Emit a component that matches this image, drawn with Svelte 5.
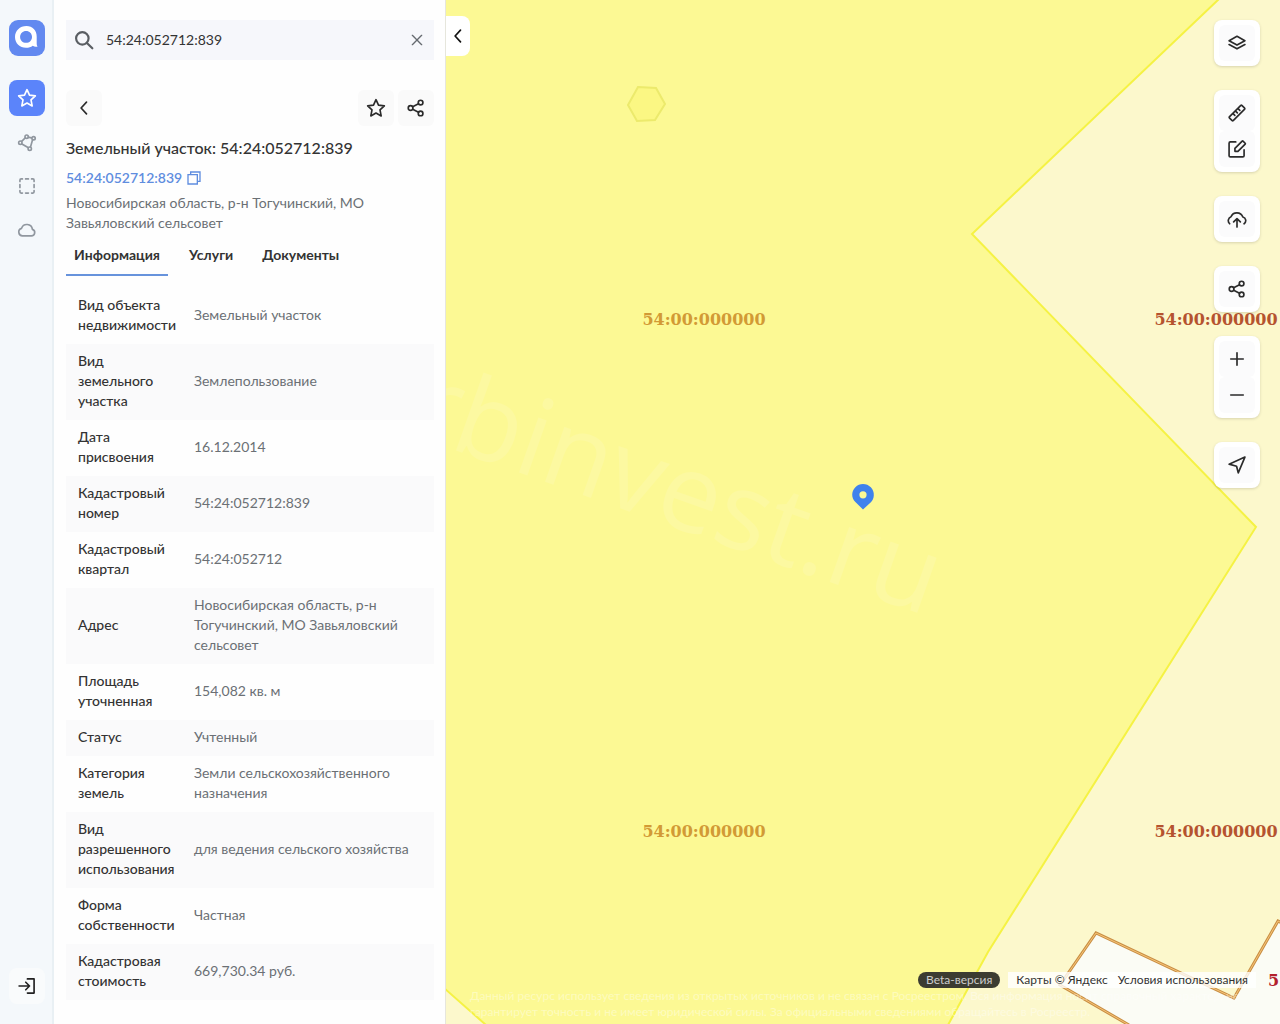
<script lang="ts">
	const cadNumber = '54:24:052712:839';

	let query = $state(cadNumber);
	let activeTab = $state('Информация');

	const tabs = ['Информация', 'Услуги', 'Документы'];

	const rows = [
		{ label: 'Вид объекта недвижимости', value: 'Земельный участок' },
		{ label: 'Вид земельного участка', value: 'Землепользование' },
		{ label: 'Дата присвоения', value: '16.12.2014' },
		{ label: 'Кадастровый номер', value: cadNumber },
		{ label: 'Кадастровый квартал', value: '54:24:052712' },
		{ label: 'Адрес', value: 'Новосибирская область, р-н Тогучинский, МО Завьяловский сельсовет' },
		{ label: 'Площадь уточненная', value: '154,082 кв. м' },
		{ label: 'Статус', value: 'Учтенный' },
		{ label: 'Категория земель', value: 'Земли сельскохозяйственного назначения' },
		{ label: 'Вид разрешенного использования', value: 'для ведения сельского хозяйства' },
		{ label: 'Форма собственности', value: 'Частная' },
		{ label: 'Кадастровая стоимость', value: '669,730.34 руб.' }
	];

	// Map controls, grouped the way they share a card
	const controls = [
		[{ icon: 'layers', label: 'Слои' }],
		[
			{ icon: 'ruler', label: 'Линейка' },
			{ icon: 'edit', label: 'Рисование' }
		],
		[{ icon: 'upload', label: 'Загрузить' }],
		[{ icon: 'share', label: 'Поделиться' }],
		[
			{ icon: 'plus', label: 'Приблизить' },
			{ icon: 'minus', label: 'Отдалить' }
		],
		[{ icon: 'locate', label: 'Моё местоположение' }]
	];

	const quarterLabels = [
		{ x: 258, y: 325, inner: true },
		{ x: 770, y: 325, inner: false },
		{ x: 258, y: 837, inner: true },
		{ x: 770, y: 837, inner: false }
	];
</script>

{#snippet icon(name: string)}
	<svg class="icon" viewBox="0 0 24 24" aria-hidden="true">
		{#if name === 'star'}
			<path d="M12 2l3 6.600 7 .8-5.200 4.900 1.400 7.200L12 18l-6.200 3.500 1.400-7.200L2 9.400l7-.8z" />
		{:else if name === 'polygon'}
			<path d="M5.600 11.300l4.300-4.200M13.400 6.100l3.900.9M5.900 14.300l7.300 4.400M18.600 9.700l-2.400 8.200" />
			<circle cx="4" cy="12.800" r="2" />
			<circle cx="11.600" cy="5.600" r="2" />
			<circle cx="19.900" cy="7.500" r="2" />
			<circle cx="15.300" cy="20" r="2" />
		{:else if name === 'area'}
			<path d="M3.500 6.500V5A1.500 1.500 0 0 1 5 3.500h1.500M10.300 3.500h3.400M17.500 3.500H19A1.500 1.500 0 0 1 20.500 5v1.500M20.500 10.300v3.400M20.500 17.500V19a1.500 1.500 0 0 1-1.500 1.500h-1.500M13.700 20.500h-3.400M6.500 20.500H5A1.500 1.500 0 0 1 3.500 19v-1.500M3.500 13.700v-3.400" />
		{:else if name === 'cloud'}
			<path d="M7.200 19h10a4 4 0 0 0 1.300-7.800 6.700 6.700 0 0 0-13-1.200A4.600 4.600 0 0 0 7.200 19z" />
		{:else if name === 'login'}
			<path d="M12.500 3.500h8v17h-8M2.500 12h12.500M10.500 7.500L15 12l-4.500 4.500" />
		{:else if name === 'back'}
			<path d="M15 5L8.500 12l6.500 7" />
		{:else if name === 'share'}
			<circle cx="5.500" cy="12" r="2.800" />
			<circle cx="17.500" cy="5.500" r="2.800" />
			<circle cx="17.500" cy="18.500" r="2.800" />
			<path d="M8 10.600l7-3.700M8 13.400l7 3.700" />
		{:else if name === 'search'}
			<circle cx="10" cy="10" r="7.500" />
			<path d="M15.500 15.500l6.500 6.500" />
		{:else if name === 'close'}
			<path d="M5 5l14 14M19 5L5 19" />
		{:else if name === 'copy'}
			<path d="M3 7h14v14H3zM7 7V3h14v14h-4" />
		{:else if name === 'layers'}
			<path d="M12 4l9.500 5.200L12 14.500 2.500 9.200zM2.500 13.800L12 19l9.500-5.200" />
		{:else if name === 'ruler'}
			<path d="M2.800 16.600L16.600 2.800q.6-.5 1.200 0l3.400 3.400q.5.6 0 1.200L7.400 21.200q-.6.500-1.200 0l-3.400-3.400q-.5-.6 0-1.200zM7 12.400l2.400 2.400M10 9.400l2.400 2.400M13 6.400l2.400 2.400" />
		{:else if name === 'edit'}
			<path d="M10.500 3.500H4A1.500 1.500 0 0 0 2.500 5v15A1.500 1.500 0 0 0 4 21.500h15a1.500 1.500 0 0 0 1.500-1.500v-7M9.500 14.800v-3.600l8.700-8.700q.5-.5 1 0l2.600 2.600q.5.500 0 1l-8.700 8.700z" />
		{:else if name === 'upload'}
			<path d="M3.200 17.700A5 5 0 0 1 4.800 9.300 7.600 7.600 0 0 1 19 9.600a4.500 4.500 0 0 1 1.500 8.100M12 21.500v-9.500M8 15.500l4-4 4 4" />
		{:else if name === 'plus'}
			<path d="M12 4.500v15M4.500 12h15" />
		{:else if name === 'minus'}
			<path d="M4.500 12h15" />
		{:else if name === 'locate'}
			<path d="M21.500 2.500L2.500 11l9 2.500 2 8z" />
		{/if}
	</svg>
{/snippet}

<div class="app">
	<nav class="sidebar">
		<a class="logo" href="/" aria-label="Главная">
			<svg viewBox="0 0 36 36" aria-hidden="true">
				<path d="M17.500 6C10.800 6 6 10.800 6 17.100s4.800 10.700 11 10.700c2.800 0 4.900-.8 6.700-2.100 1.600 1.100 3.200 1.200 4.900.8-.8-1.100-.9-2.200-.9-3.600V16.500C27.700 10.400 23.500 6 17.500 6zm-.4 4.900c3.400 0 5.900 2.600 5.900 6s-2.500 5.900-5.900 5.900-6-2.500-6-5.900 2.600-6 6-6z" />
			</svg>
		</a>
		<button class="nav-btn active" aria-label="Избранное">{@render icon('star')}</button>
		<button class="nav-btn" aria-label="Контуры">{@render icon('polygon')}</button>
		<button class="nav-btn" aria-label="Область">{@render icon('area')}</button>
		<button class="nav-btn" aria-label="Облако">{@render icon('cloud')}</button>
		<button class="nav-btn login" aria-label="Войти">{@render icon('login')}</button>
	</nav>

	<aside class="panel">
		<div class="search">
			{@render icon('search')}
			<input type="text" aria-label="Поиск" bind:value={query} />
			<button class="clear" aria-label="Очистить" onclick={() => (query = '')}>{@render icon('close')}</button>
		</div>

		<div class="toolbar">
			<button class="tool back" aria-label="Назад">{@render icon('back')}</button>
			<button class="tool" aria-label="В избранное">{@render icon('star')}</button>
			<button class="tool" aria-label="Поделиться">{@render icon('share')}</button>
		</div>

		<h1>Земельный участок: {cadNumber}</h1>
		<div class="number">
			<a href="#{cadNumber}">{cadNumber}</a>
			<button class="copy" aria-label="Скопировать">{@render icon('copy')}</button>
		</div>
		<p class="address">Новосибирская область, р-н Тогучинский, МО Завьяловский сельсовет</p>

		<div class="tabs" role="tablist">
			{#each tabs as tab}
				<button
					class="tab"
					class:selected={activeTab === tab}
					role="tab"
					aria-selected={activeTab === tab}
					onclick={() => (activeTab = tab)}>{tab}</button
				>
			{/each}
		</div>

		<table>
			<tbody>
				{#each rows as row}
					<tr>
						<th scope="row">{row.label}</th>
						<td>{row.value}</td>
					</tr>
				{/each}
			</tbody>
		</table>
	</aside>

	<main class="map">
		<svg class="canvas" viewBox="0 0 834 1024" preserveAspectRatio="xMinYMin slice" aria-hidden="true">
			<rect class="parcel" width="834" height="1024" />
			<path class="outside" d="M773 -1L526 234 810 527 542 952 502 1025H835V-1z" />
			<path class="outside" d="M-2 988L40 1025H-2z" />
			<path class="hexagon" d="M192 87l18 1 9 16-10 16-18 1-9-16z" />
			<path class="clear-land" d="M835 919L788 998 650 933 614 985 683 1025H835z" />
			<path class="road" d="M683 1025L614 985 650 933 788 998 832 921 836 923" />
			<path class="road-core" d="M683 1025L614 985 650 933 788 998 832 921 836 923" />
			<text class="watermark" x="480" y="616" transform="rotate(19.400 480 616)">urbinvest.ru</text>
			{#each quarterLabels as l}
				<text class="quarter" class:inner={l.inner} x={l.x} y={l.y} text-anchor="middle">54:00:000000</text>
			{/each}
			<text class="quarter red" x="822" y="986">5</text>
			<path class="pin" d="M417 484a10.800 10.800 0 0 0-10.800 10.800c0 3 1.200 5.200 3.200 7.300L417 509.500l7.600-6.900c2-2.100 3.200-4.300 3.200-7.300A10.800 10.800 0 0 0 417 484zm0 7.200a3.600 3.600 0 1 1 0 7.200 3.600 3.600 0 0 1 0-7.200z" />
		</svg>

		<button class="collapse" aria-label="Свернуть панель">{@render icon('back')}</button>

		<div class="controls">
			{#each controls as group}
				<div class="group">
					{#each group as c}
						<button class="control" aria-label={c.label}>{@render icon(c.icon)}</button>
					{/each}
				</div>
			{/each}
		</div>

		<footer>
			<div class="credits">
				<span class="beta">Beta-версия</span>
				<span class="copyright">
					<a href="#yandex">Карты © Яндекс</a>
					<a href="#terms">Условия использования</a>
				</span>
			</div>
			<p class="disclaimer">
				Данный ресурс использует сведения из открытых источников и не связан с Росреестром. Вся информация носит справочный характер, не
				гарантирует точность и не имеет юридической силы. За официальными сведениями обращайтесь в Росреестр.
			</p>
		</footer>
	</main>
</div>

<style>
	:global(body) {
		margin: 0;
		background: #fefefe;
		color: #333;
		font-family: Lato, 'Noto Sans', sans-serif;
		font-size: 14px;
		line-height: 20px;
	}

	.app {
		display: grid;
		grid-template-columns: 54px 392px 1fr;
		height: 100vh;
		overflow: hidden;
	}

	button {
		display: flex;
		align-items: center;
		justify-content: center;
		padding: 0;
		border: 0;
		background: none;
		color: inherit;
		font: inherit;
		cursor: pointer;
	}

	a {
		color: inherit;
		text-decoration: none;
	}

	.icon {
		flex: none;
		width: 20px;
		height: 20px;
		fill: none;
		stroke: currentColor;
		stroke-width: 2;
		stroke-linecap: round;
		stroke-linejoin: round;
	}

	.sidebar {
		display: flex;
		flex-direction: column;
		align-items: center;
		gap: 8px;
		box-sizing: border-box;
		padding: 20px 0;
		background: #f4f8fb;
		box-shadow: inset -2px 0 #e9f0f4;
	}

	.logo {
		width: 36px;
		height: 36px;
		margin: 0 0 16px;
		border-radius: 9px;
		background: #6289f0;
	}

	.logo svg {
		display: block;
		fill: #fff;
	}

	.nav-btn {
		width: 36px;
		height: 36px;
		border-radius: 8px;
		color: #90979f;
	}

	.nav-btn.active {
		background: #5b84fa;
		color: #fff;
	}

	.nav-btn.login {
		margin-top: auto;
		background: #f9fbfc;
		color: #222;
	}

	.panel {
		padding: 20px 12px;
		background: #fefefe;
	}

	.search {
		display: flex;
		align-items: center;
		gap: 12px;
		height: 40px;
		padding: 0 8px;
		background: #f6f7fb;
	}

	.search > .icon {
		color: #5a5e63;
		stroke-width: 2.6;
	}

	.search input {
		flex: 1;
		min-width: 0;
		padding: 0;
		border: 0;
		background: none;
		color: #333;
		font: inherit;
		outline: none;
	}

	.clear {
		width: 18px;
		height: 18px;
		color: #666b70;
	}

	.clear .icon {
		width: 16px;
		height: 16px;
	}

	.toolbar {
		display: flex;
		gap: 4px;
		margin-top: 30px;
	}

	.tool {
		width: 36px;
		height: 36px;
		border-radius: 6px;
		background: #fafafa;
		color: #2b2b2b;
	}

	.tool.back {
		margin-right: auto;
	}

	h1 {
		margin: 12px 0 0;
		font-size: 16px;
		font-weight: 500;
		line-height: 20px;
	}

	.number {
		display: flex;
		align-items: center;
		gap: 4px;
		margin-top: 10px;
		color: #5f8ddf;
		font-weight: 600;
	}

	.copy .icon {
		width: 16px;
		height: 16px;
		stroke-linejoin: miter;
	}

	.address {
		margin: 5px 0 0;
		color: #6b7075;
	}

	.tabs {
		display: flex;
		gap: 13px;
		margin-top: 3px;
	}

	.tab {
		height: 40px;
		padding: 0 8px;
		border-bottom: 2px solid transparent;
		font-weight: 700;
	}

	.tab.selected {
		border-color: #6793dc;
	}

	table {
		width: 100%;
		margin-top: 12px;
		border-collapse: collapse;
		table-layout: fixed;
	}

	tr:nth-child(even) {
		background: #fafafb;
	}

	th,
	td {
		padding: 7px 12px 9px;
		text-align: left;
		vertical-align: middle;
	}

	th {
		width: 100px;
		padding-right: 4px;
		font-weight: 500;
	}

	td {
		color: #6b7075;
	}

	.map {
		position: relative;
		overflow: hidden;
		background: #fcf994;
		box-shadow: -1px 0 #e6e6dc;
	}

	.canvas {
		position: absolute;
		inset: 0;
		width: 100%;
		height: 100%;
	}

	.parcel {
		fill: #fcf994;
	}

	.outside {
		fill: #fcf8cc;
		stroke: #f5f244;
		stroke-width: 2;
	}

	.hexagon {
		fill: #fbf783;
		stroke: #ecea6c;
		stroke-width: 2;
	}

	.clear-land {
		fill: #fbfcf5;
	}

	.road {
		fill: none;
		stroke: #c98f45;
		stroke-width: 3;
	}

	.road-core {
		fill: none;
		stroke: #f7c477;
		stroke-width: 1;
	}

	.watermark {
		fill: #fff;
		fill-opacity: 0.12;
		font-family: 'Open Sans', sans-serif;
		font-size: 109px;
		text-anchor: end;
	}

	.quarter {
		fill: #b5532f;
		font-family: 'DejaVu Serif', serif;
		font-size: 16px;
		font-weight: 700;
	}

	.quarter.inner {
		fill: #d29a35;
	}

	.quarter.red {
		fill: #b3202c;
	}

	.pin {
		fill: #3f82ec;
		fill-rule: evenodd;
	}

	.collapse {
		position: absolute;
		top: 16px;
		left: 0;
		width: 24px;
		height: 40px;
		border-radius: 0 8px 8px 0;
		background: #fff;
		color: #111;
	}

	.controls {
		position: absolute;
		top: 20px;
		right: 20px;
		display: flex;
		flex-direction: column;
		gap: 24px;
	}

	.group {
		padding: 5px;
		border-radius: 8px;
		background: #fff;
		box-shadow: 0 1px 3px rgba(0, 0, 0, 0.15);
	}

	.control {
		width: 36px;
		height: 36px;
		border-radius: 6px;
		background: #fbfbfc;
		color: #2b2b2b;
	}

	footer {
		position: absolute;
		right: 24px;
		bottom: 4px;
		left: 24px;
		font-size: 12px;
		line-height: 16px;
	}

	.credits {
		display: flex;
		justify-content: flex-end;
		gap: 8px;
	}

	.beta {
		padding: 0 8px;
		border-radius: 8px;
		background: #3c3c31;
		color: #ccc;
	}

	.copyright {
		display: flex;
		gap: 10px;
		padding: 0 8px;
		background: rgba(255, 255, 255, 0.8);
	}

	.disclaimer {
		margin: 0;
		color: rgba(255, 255, 255, 0.4);
	}
</style>
